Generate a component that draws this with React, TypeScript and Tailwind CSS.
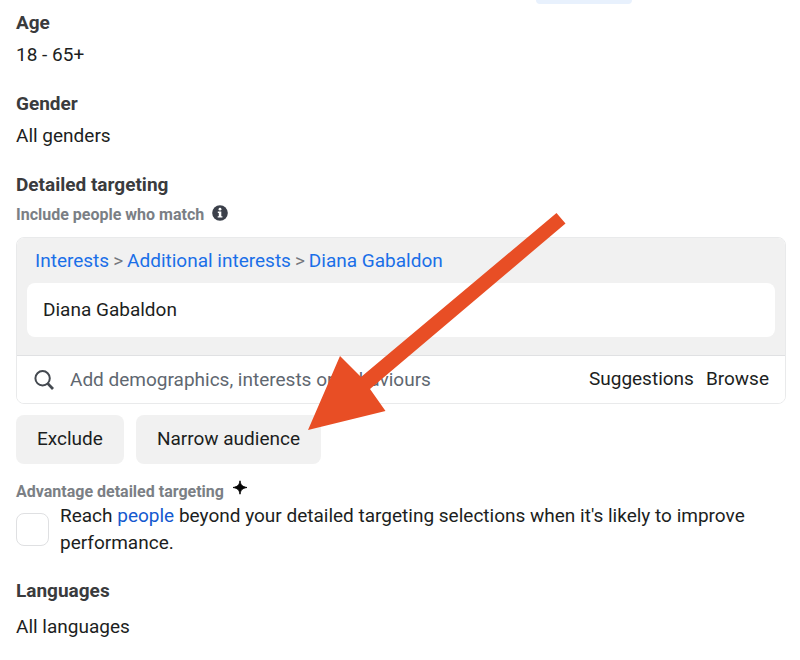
import React from "react";

type SectionProps = {
  title: string;
  value: string;
  loose?: boolean;
};

const crumbs = ["Interests", "Additional interests", "Diana Gabaldon"];

function InfoIcon() {
  return (
    <svg className="size-4" viewBox="0 0 16 16" aria-hidden="true">
      <circle cx="8" cy="8" r="7.8" fill="#3b404a" />
      <circle cx="8" cy="4.2" r="1.4" fill="#fff" />
      <path d="M5.8 6.6h3.5v4.6h1.1v1.4H5.7v-1.4h1.1V8h-1z" fill="#fff" />
    </svg>
  );
}

function SearchIcon() {
  return (
    <svg
      className="size-5 shrink-0"
      viewBox="0 0 20 20"
      fill="none"
      stroke="#444950"
      strokeWidth="2"
      aria-hidden="true"
    >
      <circle cx="8.6" cy="8.3" r="7.2" />
      <path d="M13.6 13.4L19 19" strokeWidth="2.8" />
    </svg>
  );
}

function SparkleIcon() {
  return (
    <svg className="size-4" viewBox="0 0 16 16" aria-hidden="true">
      <path
        d="M8 .8C8.8 5 10 6.6 15 7.5 10 8.4 8.8 10 8 14.2 7.2 10 6 8.4 1 7.5 6 6.6 7.2 5 8 .8z"
        fill="#050505"
        stroke="#050505"
        strokeWidth="0.9"
      />
    </svg>
  );
}

function Section({ title, value, loose }: SectionProps) {
  return (
    <section className={`flex flex-col ${loose ? "gap-2.5" : "gap-1.5"}`}>
      <h2 className="font-bold leading-6 text-[#3a3b3d]">{title}</h2>
      <p className="leading-7">{value}</p>
    </section>
  );
}

export default function App() {
  return (
    <main className="bg-white pr-3.5 pl-4 font-[Roboto,sans-serif] text-[19px] text-[#1c1e21]">
      <div className="mr-[20%] ml-auto h-1 w-24 rounded-b-md bg-[#e8f1fd]" />

      <div className="flex flex-col gap-[23px] pt-[7px]">
        <Section title="Age" value="18 - 65+" />
        <Section title="Gender" value="All genders" />

        <section>
          <h2 className="font-bold leading-6 text-[#3a3b3d]">
            Detailed targeting
          </h2>
          <div className="mt-1.5 flex items-start gap-2 leading-6">
            <h3 className="text-[16px] font-bold text-[#7b7f85]">
              Include people who match
            </h3>
            <div className="pt-0.5">
              <InfoIcon />
            </div>
          </div>

          <div className="relative mt-2.5">
            <div className="overflow-hidden rounded-lg border border-[#e9eaeb]">
              <div className="border-b border-[#e0e1e3] bg-[#f1f1f1] px-2.5 pb-[18px]">
                <nav
                  aria-label="Interest path"
                  className="flex gap-1 px-2 pt-[9px] pb-2 leading-7"
                >
                  {crumbs.map((crumb, i) => (
                    <React.Fragment key={crumb}>
                      {i > 0 && <span className="text-[#75787d]">&gt;</span>}
                      <a href="#" className="text-[#1a6fe8]">
                        {crumb}
                      </a>
                    </React.Fragment>
                  ))}
                </nav>
                <div className="rounded-lg bg-white px-4 py-[13px] leading-7">
                  Diana Gabaldon
                </div>
              </div>

              <div className="flex items-center bg-white pr-4 pl-[17px]">
                <SearchIcon />
                <input
                  type="text"
                  aria-label="Add targeting"
                  placeholder="Add demographics, interests or behaviours"
                  className="h-[47px] min-w-0 flex-1 px-4 placeholder:text-[#606770] focus:outline-none"
                />
                <div className="flex gap-3">
                  <button type="button">Suggestions</button>
                  <button type="button">Browse</button>
                </div>
              </div>
            </div>

            <div className="mt-[11px] flex gap-3">
              <button
                type="button"
                className="h-[49px] rounded-lg bg-[#f1f1f1] px-[21px]"
              >
                Exclude
              </button>
              <button
                type="button"
                className="h-[49px] rounded-lg bg-[#f1f1f1] px-[21px]"
              >
                Narrow audience
              </button>
            </div>

            {/* arrow pointing at the narrow audience button */}
            <svg
              className="pointer-events-none absolute -top-6 left-[292px] h-[218px] w-[258px]"
              viewBox="0 0 258 218"
              aria-hidden="true"
            >
              <path
                d="M0 217L32 143 53 164 248.500 0 257.500 10.500 62 176 77.500 198z"
                fill="#e84e25"
              />
            </svg>
          </div>

          <div className="mt-4 flex items-start gap-2 leading-6">
            <h3 className="text-[16px] font-bold text-[#7b7f85]">
              Advantage detailed targeting
            </h3>
            <SparkleIcon />
          </div>
          <div className="-mt-0.5 flex items-center gap-[11px]">
            <input
              id="reach"
              type="checkbox"
              className="size-[33px] shrink-0 appearance-none rounded-lg border border-[#dfe0e2] bg-white checked:bg-[#1b74e4]"
            />
            <label htmlFor="reach" className="leading-[27px]">
              Reach{" "}
              <a href="#" className="text-[#1459cf]">
                people
              </a>{" "}
              beyond your detailed targeting selections when it's likely to
              improve performance.
            </label>
          </div>
        </section>

        <Section title="Languages" value="All languages" loose />
      </div>
    </main>
  );
}
